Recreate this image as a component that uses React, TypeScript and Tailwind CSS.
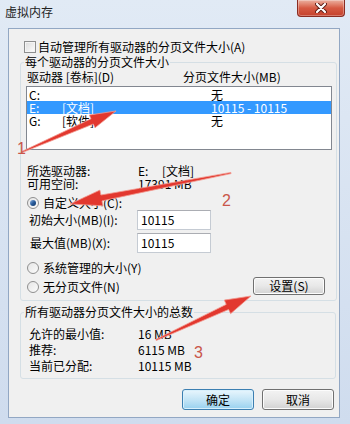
import React from "react"

// tapered annotation arrow: thin tail, wide head
function arrowPoints(x1: number, y1: number, x2: number, y2: number, head: number, half: number, shaft: number) {
  const len = Math.hypot(x2 - x1, y2 - y1)
  const dx = (x2 - x1) / len
  const dy = (y2 - y1) / len
  const nx = -dy
  const ny = dx
  const bx = x2 - dx * head
  const by = y2 - dy * head
  const pts = [
    [x1 + nx * 0.6, y1 + ny * 0.6],
    [bx + nx * shaft, by + ny * shaft],
    [bx + nx * half, by + ny * half],
    [x2, y2],
    [bx - nx * half, by - ny * half],
    [bx - nx * shaft, by - ny * shaft],
    [x1 - nx * 0.6, y1 - ny * 0.6],
  ]
  return pts.map((p) => `${p[0].toFixed(1)},${p[1].toFixed(1)}`).join(" ")
}

const arrows = [
  { x1: 22, y1: 152, x2: 116, y2: 111, head: 26, half: 7, shaft: 2.8 },
  { x1: 231, y1: 173, x2: 70, y2: 204, head: 32, half: 8, shaft: 3 },
  { x1: 156, y1: 340, x2: 251, y2: 296, head: 26, half: 7.5, shaft: 2.8 },
]

function Radio({ checked }: { checked?: boolean }) {
  return (
    <span className="flex h-[12px] w-[12px] items-center justify-center rounded-full border border-[#8f8f8f] bg-linear-to-br from-[#e6e6e6] to-[#fbfbfb]">
      {checked && (
        <span className="h-[6px] w-[6px] rounded-full bg-linear-to-br from-[#8fb6e3] via-[#2a5d9c] to-[#0f3565]" />
      )}
    </span>
  )
}

function Button({ label, primary }: { label: string; primary?: boolean }) {
  return (
    <div
      className={
        primary
          ? "flex h-[21px] w-[72px] items-center justify-center rounded-[3px] border border-[#3c7fb1] bg-linear-to-b from-[#e8f6fd] via-[#c4e5f6] to-[#98d1ef] shadow-[inset_0_0_0_1px_#d8f0fc]"
          : "flex h-[21px] w-[72px] items-center justify-center rounded-[3px] border border-[#707070] bg-linear-to-b from-[#f3f3f3] via-[#e8e8e8] to-[#d2d2d2] shadow-[inset_0_0_0_1px_#fcfcfc]"
      }
    >
      {label}
    </div>
  )
}

const drives = [
  { drive: "C:", label: "", size: "无" },
  { drive: "E:", label: "[文档]", size: "10115 - 10115", selected: true },
  { drive: "G:", label: "[软件]", size: "无" },
]

export default function App() {
  return (
    <div className="relative h-[424px] w-[350px] overflow-hidden bg-linear-to-b from-[#e1eaf5] to-[#cfdcee] font-['Noto_Sans_CJK_SC',sans-serif] text-[12px] leading-[14px] text-black">
      {/* title bar */}
      <div className="flex h-[28px] items-start justify-between">
        <span className="pl-[5px] pt-[5px] text-[#222]">虚拟内存</span>
        <div className="mr-[5px] flex h-[17px] w-[48px] items-center justify-center rounded-b-[4px] border border-t-0 border-[#8a2c22] bg-linear-to-b from-[#eab0a0] via-[#d65a43] to-[#c4412c] shadow-[inset_0_0_0_1px_rgba(255,255,255,0.3)]">
          <svg width="12" height="10" viewBox="0 0 12 10">
            <path d="M2 1 L10 9 M10 1 L2 9" stroke="#5a1a12" strokeWidth="4" strokeLinecap="round" />
            <path d="M2 1 L10 9 M10 1 L2 9" stroke="#ffffff" strokeWidth="2.2" strokeLinecap="round" />
          </svg>
        </div>
      </div>

      {/* client area */}
      <div className="ml-[8px] flex h-[390px] w-[332px] flex-col border border-[#92a7c3] bg-[#f0f0f0] pl-[11px] pr-[3px]">
        <div className="ml-[4px] mt-[11px] flex h-[14px] items-center gap-[2px]">
          <span className="h-[12px] w-[12px] border border-[#8e8f8f] bg-linear-to-br from-[#dcdcdc] to-[#fdfdfd] shadow-[inset_0_0_0_1px_#f4f4f4]" />
          <span>自动管理所有驱动器的分页文件大小(A)</span>
        </div>

        <fieldset className="mt-[1px] w-[316px] rounded-[3px] border border-[#d5dfe5] pb-[5px] pl-[5px] pr-[4px]">
          <legend className="-ml-[2px] px-[1px] leading-[14px]">每个驱动器的分页文件大小</legend>
          <div className="mt-[1px] flex h-[14px] pl-[1px]">
            <span className="w-[156px]">驱动器 [卷标](D)</span>
            <span>分页文件大小(MB)</span>
          </div>
          <div className="mt-[2px] h-[64px] w-[306px] border border-[#828790] bg-white pt-[1px]">
            {drives.map((d) => (
              <div
                key={d.drive}
                className={
                  d.selected
                    ? "flex h-[13px] bg-[#3399ff] pl-[2px] leading-[13px] text-white"
                    : "flex h-[13px] pl-[2px] leading-[13px]"
                }
              >
                <span className="w-[33px]">{d.drive}</span>
                <span className="w-[149px]">{d.label}</span>
                <span>{d.size}</span>
              </div>
            ))}
          </div>

          <div className="mt-[14px] flex h-[13px] pl-[1px] leading-[13px]">
            <span className="w-[111px]">所选驱动器:</span>
            <span className="w-[24px]">E:</span>
            <span>[文档]</span>
          </div>
          <div className="flex h-[13px] pl-[1px] leading-[13px]">
            <span className="w-[111px]">可用空间:</span>
            <span>17391 MB</span>
          </div>

          <div className="ml-[1px] mt-[6px] flex h-[14px] items-center gap-[4px]">
            <Radio checked />
            <span>自定义大小(C):</span>
          </div>
          <div className="flex h-[20px] items-center pl-[3px]">
            <span className="w-[108px]">初始大小(MB)(I):</span>
            <div className="flex h-[20px] w-[74px] items-center border border-[#c5cbd3] border-t-[#abadb3] bg-white pl-[3px]">10115</div>
          </div>
          <div className="mt-[3px] flex h-[20px] items-center pl-[4px]">
            <span className="w-[107px]">最大值(MB)(X):</span>
            <div className="flex h-[20px] w-[74px] items-center border border-[#c5cbd3] border-t-[#abadb3] bg-white pl-[3px]">10115</div>
          </div>

          <div className="ml-[1px] mt-[8px] flex h-[14px] items-center gap-[4px]">
            <Radio />
            <span>系统管理的大小(Y)</span>
          </div>
          <div className="mt-[2px] flex h-[18px] items-center justify-between">
            <div className="ml-[1px] flex items-center gap-[4px] pt-[2px]">
              <Radio />
              <span>无分页文件(N)</span>
            </div>
            <div className="mr-[7px] flex h-[18px] w-[72px] items-center justify-center rounded-[3px] border border-[#707070] bg-linear-to-b from-[#f3f3f3] via-[#e8e8e8] to-[#d2d2d2] shadow-[inset_0_0_0_1px_#fcfcfc]">
              设置(S)
            </div>
          </div>
        </fieldset>

        <fieldset className="mt-[4px] w-[316px] rounded-[3px] border border-[#d5dfe5] pb-[4px] pl-[5px]">
          <legend className="-ml-[2px] px-[1px] leading-[14px]">所有驱动器分页文件大小的总数</legend>
          <div className="mt-[7px] flex flex-col pl-[3px] leading-[16px]">
            <div className="flex h-[16px]">
              <span className="w-[109px]">允许的最小值:</span>
              <span>16 MB</span>
            </div>
            <div className="flex h-[16px]">
              <span className="w-[109px]">推荐:</span>
              <span>6115 MB</span>
            </div>
            <div className="flex h-[16px]">
              <span className="w-[109px]">当前已分配:</span>
              <span>10115 MB</span>
            </div>
          </div>
        </fieldset>

        <div className="mr-[2px] mt-[10px] flex justify-end gap-[8px]">
          <Button label="确定" primary />
          <Button label="取消" />
        </div>
      </div>

      {/* red annotation arrows over the dialog */}
      <svg className="pointer-events-none absolute left-0 top-0" width="350" height="424" viewBox="0 0 350 424">
        {arrows.map((a, i) => (
          <polygon
            key={i}
            points={arrowPoints(a.x1, a.y1, a.x2, a.y2, a.head, a.half, a.shaft)}
            fill="#e2382f"
            stroke="#f29a90"
            strokeWidth="0.8"
            strokeLinejoin="round"
          />
        ))}
        <text x="17" y="154" fontSize="16" fill="#c9564a" fontFamily="Liberation Sans, sans-serif">1</text>
        <text x="222" y="206" fontSize="16" fill="#c9564a" fontFamily="Liberation Sans, sans-serif">2</text>
        <text x="194" y="358" fontSize="16" fill="#c9564a" fontFamily="Liberation Sans, sans-serif">3</text>
      </svg>
    </div>
  )
}
